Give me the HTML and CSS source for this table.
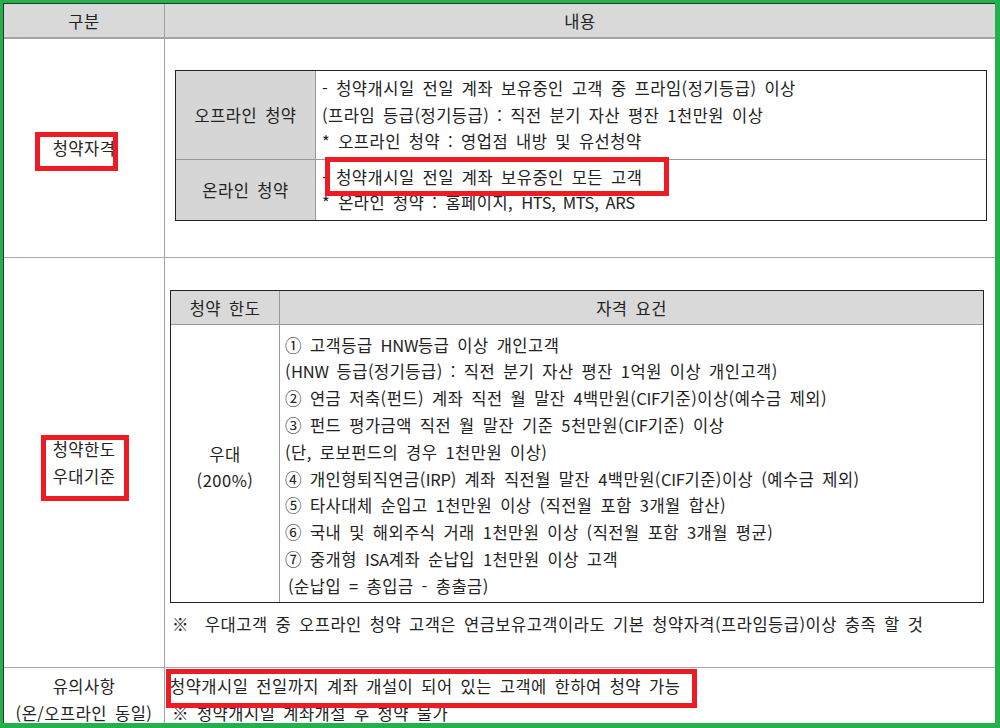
FILE: index.html
```html
<!DOCTYPE html>
<html lang="ko">
<head>
<meta charset="utf-8">
<title>청약 안내</title>
<link rel="stylesheet" href="styles.css">
</head>
<body>
<div class="frame">
  <div class="sheet">
    <div class="row head">
      <div class="c1 cell-center">구분</div>
      <div class="c2 cell-center">내용</div>
    </div>

    <div class="row r1">
      <div class="c1 cell-center">청약자격</div>
      <div class="c2">
        <div class="box1">
          <div class="b1row b1a">
            <div class="lab">오프라인 청약</div>
            <div class="txt">
              <p>- 청약개시일 전일 계좌 보유중인 고객 중 프라임(정기등급) 이상</p>
              <p>(프라임 등급(정기등급) : 직전 분기 자산 평잔 1천만원 이상</p>
              <p>* 오프라인 청약 : 영업점 내방 및 유선청약</p>
            </div>
          </div>
          <div class="b1row b1b">
            <div class="lab">온라인 청약</div>
            <div class="txt">
              <p>- 청약개시일 전일 계좌 보유중인 모든 고객</p>
              <p>* 온라인 청약 : 홈페이지, <span class="lat">HTS, MTS, ARS</span></p>
            </div>
          </div>
        </div>
      </div>
    </div>

    <div class="row r2">
      <div class="c1 cell-center two-lines">
        <p>청약한도</p>
        <p>우대기준</p>
      </div>
      <div class="c2">
        <div class="box2">
          <div class="b2head">
            <div class="b2h-left">청약 한도</div>
            <div class="b2h-right">자격 요건</div>
          </div>
          <div class="b2body">
            <div class="b2-left">
              <p>우대</p>
              <p>(200%)</p>
            </div>
            <div class="b2-right">
              <p>① 고객등급 <span class="lat">HNW</span>등급 이상 개인고객</p>
              <p>(<span class="lat">HNW</span> 등급(정기등급) : 직전 분기 자산 평잔 1억원 이상 개인고객)</p>
              <p>② 연금 저축(펀드) 계좌 직전 월 말잔 4백만원(<span class="lat">CIF</span>기준)이상(예수금 제외)</p>
              <p>③ 펀드 평가금액 직전 월 말잔 기준 5천만원(<span class="lat">CIF</span>기준) 이상</p>
              <p>(단, 로보펀드의 경우 1천만원 이상)</p>
              <p>④ 개인형퇴직연금(<span class="lat">IRP</span>) 계좌 직전월 말잔 4백만원(<span class="lat">CIF</span>기준)이상 (예수금 제외)</p>
              <p>⑤ 타사대체 순입고 1천만원 이상 (직전월 포함 3개월 합산)</p>
              <p>⑥ 국내 및 해외주식 거래 1천만원 이상 (직전월 포함 3개월 평균)</p>
              <p>⑦ 중개형 <span class="lat">ISA</span>계좌 순납입 1천만원 이상 고객</p>
              <p class="indent">(순납입 = 총입금 - 총출금)</p>
            </div>
          </div>
        </div>
        <p class="note">※&nbsp; 우대고객 중 오프라인 청약 고객은 연금보유고객이라도 기본 청약자격(프라임등급)이상 충족 할 것</p>
      </div>
    </div>

    <div class="row r3">
      <div class="c1 r3-left">
        <p>유의사항</p>
        <p>(온/오프라인 동일)</p>
      </div>
      <div class="c2 r3-right">
        <p>청약개시일 전일까지 계좌 개설이 되어 있는 고객에 한하여 청약 가능</p>
        <p class="note2">※ 청약개시일 계좌개설 후 청약 불가</p>
      </div>
    </div>
  </div>
</div>

<div class="mark m1"></div>
<div class="mark m2"></div>
<div class="mark m3"></div>
<div class="mark m4"></div>
</body>
</html>
```

FILE: styles.css
```css
* { box-sizing: border-box; margin: 0; padding: 0; }
html, body { margin: 0; background: #ffffff; }
body {
  font-family: "Noto Sans CJK KR", "Noto Sans", sans-serif;
  font-size: 16.5px;
  font-weight: 400;
  color: #222222;
  letter-spacing: 0.5px;
  word-spacing: 2.8px;
}
p { white-space: nowrap; }
.lat { letter-spacing: -0.3px; }

.frame {
  position: relative;
  width: 1000px;
  height: 728px;
  border-style: solid;
  border-color: #22b14c;
  border-width: 3px 5px 5px 3px;
  overflow: hidden;
}
.sheet {
  border-top: 1px solid #333333;
  border-left: 1px solid #333333;
}
.row {
  display: grid;
  grid-template-columns: 161px 1fr;
}
.c1 {
  border-right: 1px solid #a0a0a0;
  text-align: center;
}
.cell-center {
  display: flex;
  flex-direction: column;
  align-items: center;
  justify-content: center;
}
.two-lines { line-height: 27px; }

.head {
  height: 35px;
  background: #d9d9d9;
  border-bottom: 2px solid #a4a4a4;
}

.r1 {
  height: 219px;
  border-bottom: 1px solid #a8a8a8;
}
.r1 .c2 { padding: 31px 8px 0 10px; }

.box1 { border: 1px solid #222222; }
.b1row {
  display: grid;
  grid-template-columns: 140px 1fr;
}
.b1a { height: 89px; border-bottom: 1px solid #999999; }
.b1b { height: 60px; }
.lab {
  background: #d6d6d6;
  border-right: 1px solid #999999;
  display: flex;
  align-items: center;
  justify-content: center;
}
.txt {
  padding-left: 6px;
  display: flex;
  flex-direction: column;
  justify-content: center;
  line-height: 26.5px;
}
.b1b .txt { line-height: 25px; }

.r2 {
  height: 410px;
  border-bottom: 1px solid #a8a8a8;
}
.r2 .c2 { padding: 32px 11px 0 5px; }
.box2 { border: 1px solid #222222; }
.b2head {
  display: grid;
  grid-template-columns: 109px 1fr;
  height: 34px;
  background: #d9d9d9;
  border-bottom: 1px solid #999999;
}
.b2h-left, .b2h-right {
  display: flex;
  align-items: center;
  justify-content: center;
}
.b2h-left { border-right: 1px solid #999999; }
.b2body {
  display: grid;
  grid-template-columns: 109px 1fr;
  height: 277px;
}
.b2-left {
  border-right: 1px solid #999999;
  display: flex;
  flex-direction: column;
  align-items: center;
  justify-content: center;
  line-height: 26px;
  padding-top: 6px;
}
.b2-right {
  padding: 6.6px 0 0 5px;
  line-height: 26.8px;
}
.indent { padding-left: 3px; }
.note {
  margin-top: 8px;
  padding-left: 2px;
  line-height: 26px;
}

.r3 { height: 60px; }
.r3-left {
  padding-top: 5px;
  line-height: 27px;
}
.r3-right {
  padding: 5px 0 0 5px;
  line-height: 27px;
}
.note2 { padding-left: 2px; }

.mark {
  position: absolute;
  border: 5px solid #ed1c24;
}
.m1 { left: 35px; top: 132px; width: 83px; height: 39px; }
.m2 { left: 325px; top: 157px; width: 344px; height: 39px; }
.m3 { left: 41px; top: 435px; width: 88px; height: 66px; }
.m4 { left: 166px; top: 669px; width: 531px; height: 39px; }
```
